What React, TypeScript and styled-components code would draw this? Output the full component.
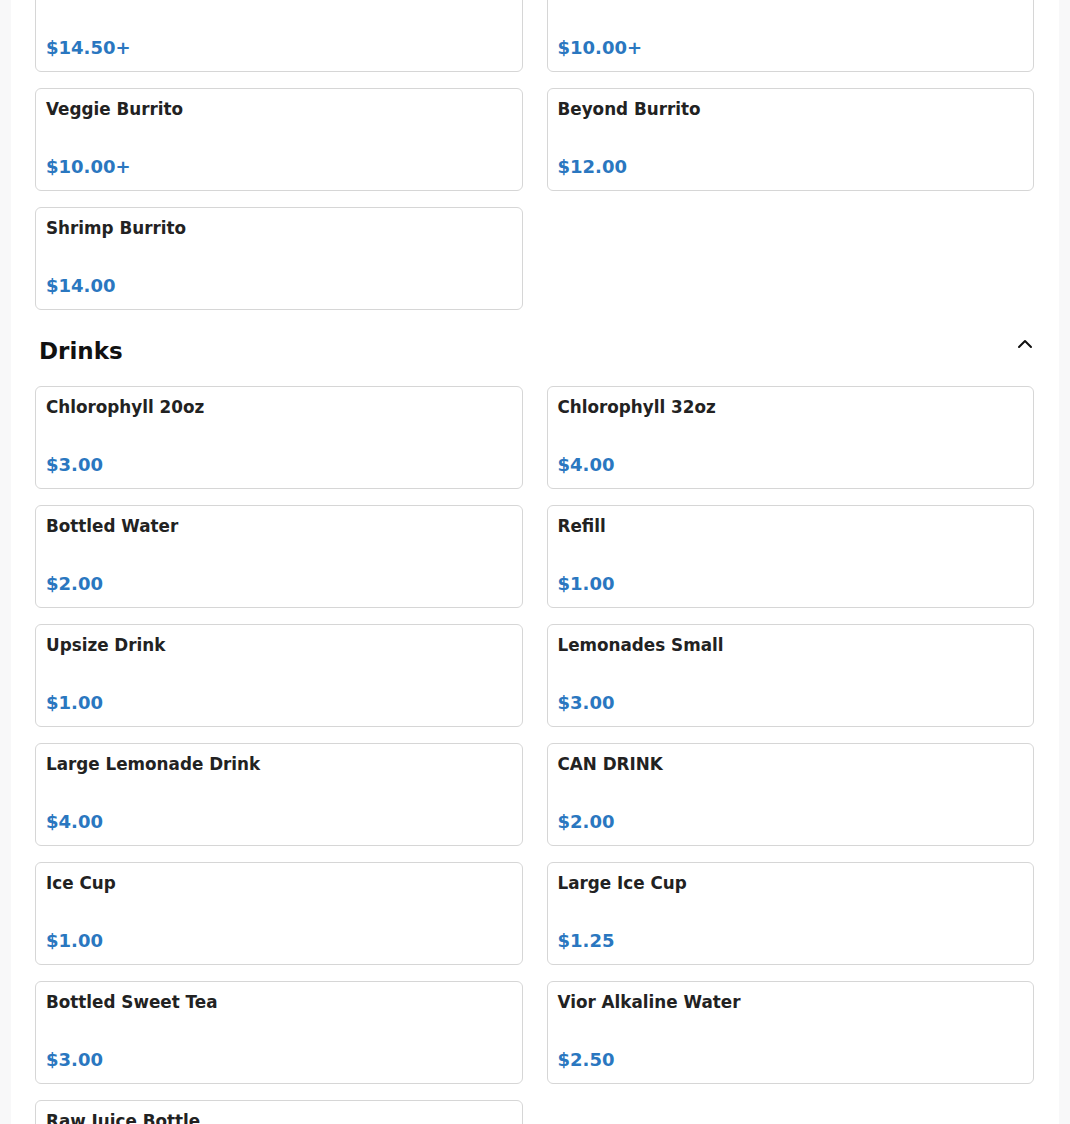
import React from 'react'
import styled, { createGlobalStyle } from 'styled-components'
import { ChevronUp } from 'lucide-react'

const GlobalStyle = createGlobalStyle`
    html, body {
        margin: 0;
        padding: 0;
        overflow: hidden;
        background: #f8f8f9;
        font-family: 'DejaVu Sans', 'Liberation Sans', sans-serif;
    }
`

const Panel = styled.main`
    max-width: 1048px;
    margin: 0 auto;
    min-height: 100vh;
    padding: 0 25px 0 24px;
    box-sizing: border-box;
    background: #fff;
`

const Section = styled.section<{ $scrolled?: boolean }>`
    margin-top: ${(p) => (p.$scrolled ? '-31px' : '0')};
`

const SectionHeader = styled.div`
    display: flex;
    justify-content: space-between;
    align-items: flex-start;
    margin: 22px -3px 22px 0;
    padding-left: 4px;
`

const SectionTitle = styled.h2`
    margin: 6px 0 0;
    font-size: 23px;
    line-height: 26px;
    font-weight: 700;
    color: #111;
`

const ToggleButton = styled.button`
    display: flex;
    padding: 0;
    border: none;
    background: none;
    color: #111;
    cursor: pointer;
`

const Grid = styled.div`
    display: grid;
    grid-template-columns: 1fr 1fr;
    column-gap: 24px;
    row-gap: 16px;
`

const Card = styled.div`
    display: flex;
    flex-direction: column;
    border: 1px solid #d6d6d6;
    border-radius: 6px;
    padding: 10px 10px 13px;
    background: #fff;
`

const ItemName = styled.div`
    font-size: 16.8px;
    line-height: 20px;
    font-weight: 700;
    color: #222;
    margin-bottom: 37px;
`

const ItemPrice = styled.div`
    font-size: 18px;
    line-height: 21px;
    font-weight: 700;
    color: #2a77c0;
`

type Item = { name: string; price: string }

const burritos: Item[] = [
    { name: 'Steak Burrito', price: '$14.50+' },
    { name: 'Chicken Burrito', price: '$10.00+' },
    { name: 'Veggie Burrito', price: '$10.00+' },
    { name: 'Beyond Burrito', price: '$12.00' },
    { name: 'Shrimp Burrito', price: '$14.00' },
]

const drinks: Item[] = [
    { name: 'Chlorophyll 20oz', price: '$3.00' },
    { name: 'Chlorophyll 32oz', price: '$4.00' },
    { name: 'Bottled Water', price: '$2.00' },
    { name: 'Refill', price: '$1.00' },
    { name: 'Upsize Drink', price: '$1.00' },
    { name: 'Lemonades Small', price: '$3.00' },
    { name: 'Large Lemonade Drink', price: '$4.00' },
    { name: 'CAN DRINK', price: '$2.00' },
    { name: 'Ice Cup', price: '$1.00' },
    { name: 'Large Ice Cup', price: '$1.25' },
    { name: 'Bottled Sweet Tea', price: '$3.00' },
    { name: 'Vior Alkaline Water', price: '$2.50' },
    { name: 'Raw Juice Bottle', price: '$6.00' },
]

const ItemGrid = ({ items }: { items: Item[] }) => (
    <Grid>
        {items.map((item) => (
            <Card key={item.name}>
                <ItemName>{item.name}</ItemName>
                <ItemPrice>{item.price}</ItemPrice>
            </Card>
        ))}
    </Grid>
)

const App = () => {
    return (
        <>
            <GlobalStyle />
            <Panel>
                <Section $scrolled>
                    <ItemGrid items={burritos} />
                </Section>
                <Section>
                    <SectionHeader>
                        <SectionTitle>Drinks</SectionTitle>
                        <ToggleButton aria-label='Collapse Drinks'>
                            <ChevronUp size={24} strokeWidth={2} />
                        </ToggleButton>
                    </SectionHeader>
                    <ItemGrid items={drinks} />
                </Section>
            </Panel>
        </>
    )
}

export default App
